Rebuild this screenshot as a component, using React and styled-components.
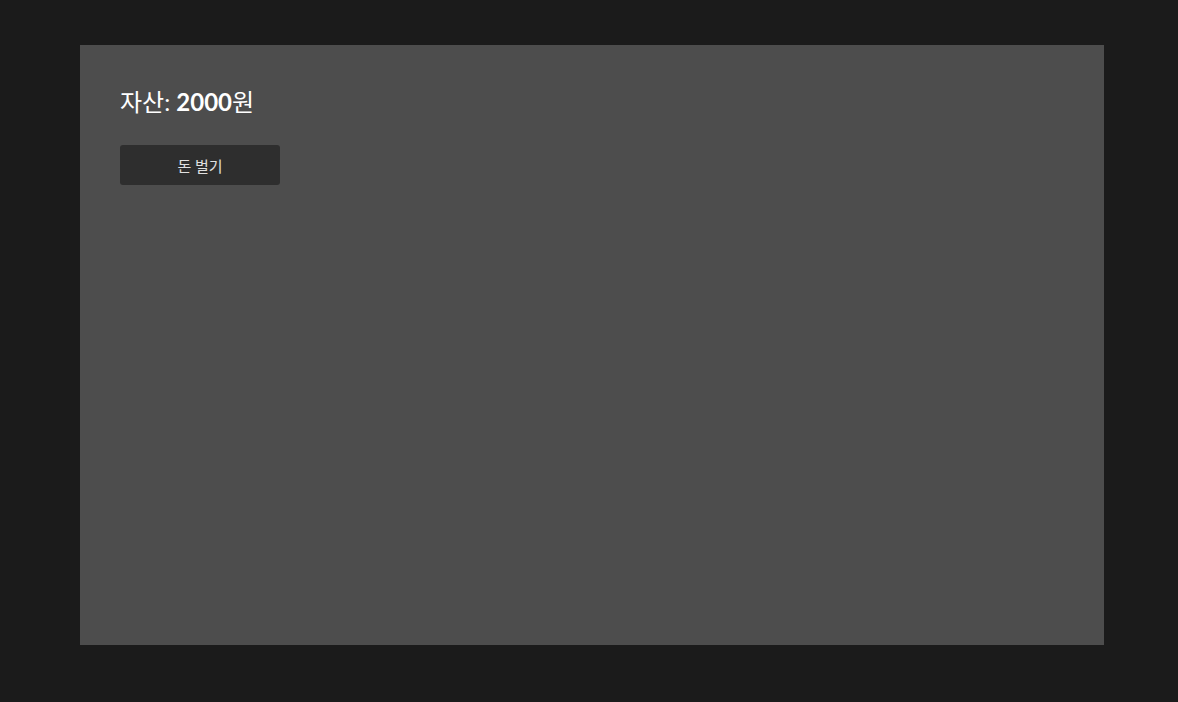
import React, { useState } from "react";
import styled, { createGlobalStyle } from "styled-components";

const GlobalStyle = createGlobalStyle`
  html, body {
    margin: 0;
    padding: 0;
    background: #1b1b1b;
    font-family: Lato, "Noto Sans CJK KR", sans-serif;
  }
`;

const Page = styled.div`
  padding: 45px 0 0 80px;
  min-height: 702px;
  box-sizing: border-box;
`;

const Panel = styled.div`
  width: 1024px;
  height: 600px;
  box-sizing: border-box;
  background: #4d4d4d;
  padding: 40px;
  display: flex;
  flex-direction: column;
  align-items: flex-start;
`;

const Title = styled.h2`
  margin: 0;
  font-family: Lato, "Noto Sans CJK KR", sans-serif;
  font-size: 24px;
  font-weight: 400;
  line-height: 34px;
  color: #ffffff;
`;

const Amount = styled.span`
  font-weight: 700;
`;

const Button = styled.button`
  margin-top: 26px;
  width: 160px;
  height: 40px;
  border: none;
  border-radius: 3px;
  background: #2e2e2e;
  color: #e0e0e0;
  font-family: Lato, "Noto Sans CJK KR", sans-serif;
  font-size: 15px;
  cursor: pointer;
`;

const App = () => {
  const [money, setMoney] = useState(2000);

  return (
    <>
      <GlobalStyle />
      <Page>
        <Panel>
          <Title>
            자산: <Amount>{money}</Amount>원
          </Title>
          <Button onClick={() => setMoney(money + 100)}>돈 벌기</Button>
        </Panel>
      </Page>
    </>
  );
};

export default App;
